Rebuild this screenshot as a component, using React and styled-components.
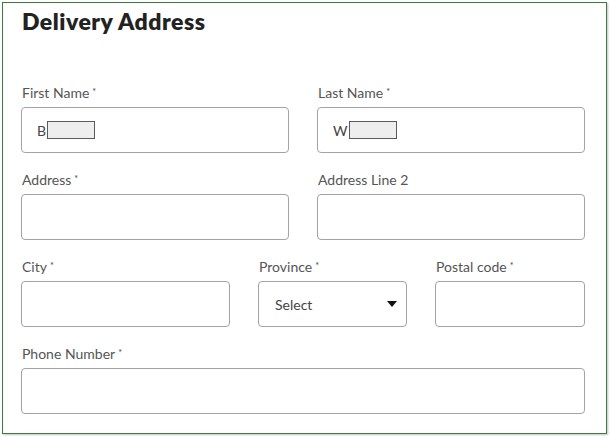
import React from 'react'
import styled, { createGlobalStyle } from 'styled-components';

const Global = createGlobalStyle`
  body {
    margin: 0;
    background: #fff;
    font-family: Lato, "Liberation Sans", sans-serif;
  }
`

const Page = styled.div`
  padding: 2px;
`

const Frame = styled.section`
  box-sizing: border-box;
  width: 605px;
  height: 432px;
  border: 1px solid #3d7a3f;
  box-shadow: 1px 1px 2px rgba(0, 0, 0, 0.25);
  padding: 4px 21px 0 18px;
  background: #fff;
`

const Title = styled.h2`
  margin: 0 0 49px 1px;
  font-size: 23px;
  line-height: 28px;
  font-weight: 800;
  letter-spacing: 0.5px;
  color: #222;
`

const Row = styled.div`
  display: grid;
  grid-template-columns: ${p => p.$cols || '1fr 1fr'};
  column-gap: 28px;
  margin-bottom: 18px;
`

const Field = styled.div`
  display: flex;
  flex-direction: column;
`

const Label = styled.label`
  display: block;
  height: 18px;
  margin: 0 0 5px 1px;
  font-size: 14px;
  line-height: 18px;
  color: #555;
`

const Required = styled.span`
  position: relative;
  top: -3px;
  margin-left: 3px;
  font-size: 9px;
  line-height: 0;
  color: #444;
`

const Box = styled.div`
  box-sizing: border-box;
  height: 46px;
  border: 1px solid #a3a3a3;
  border-radius: 4px;
  background: #fff;
  display: flex;
  align-items: center;
  padding: 0 15px;
  font-size: 14px;
  color: #444;
`

const Redacted = styled.span`
  display: inline-block;
  width: 46px;
  height: 16px;
  margin-left: 1px;
  background: #eeeeee;
  border: 1px solid #5a5a5a;
`

const SelectBox = styled(Box)`
  justify-content: space-between;
  padding-left: 16px;
  padding-right: 9px;
`

const Caret = styled.span`
  width: 0;
  height: 0;
  border-left: 5px solid transparent;
  border-right: 5px solid transparent;
  border-top: 6px solid #111;
`

const FormField = ({ label, required, children }) => (
  <Field>
    <Label>{label}{required && <Required>*</Required>}</Label>
    {children || <Box />}
  </Field>
)

export default function App() {
  return (
    <Page>
      <Global />
      <Frame>
        <Title>Delivery Address</Title>
        <Row>
          <FormField label="First Name" required>
            <Box>B<Redacted /></Box>
          </FormField>
          <FormField label="Last Name" required>
            <Box>W<Redacted /></Box>
          </FormField>
        </Row>
        <Row>
          <FormField label="Address" required />
          <FormField label="Address Line 2" />
        </Row>
        <Row $cols="209px 149px 1fr">
          <FormField label="City" required />
          <FormField label="Province" required>
            <SelectBox>Select<Caret /></SelectBox>
          </FormField>
          <FormField label="Postal code" required />
        </Row>
        <Row $cols="1fr">
          <FormField label="Phone Number" required />
        </Row>
      </Frame>
    </Page>
  )
}
